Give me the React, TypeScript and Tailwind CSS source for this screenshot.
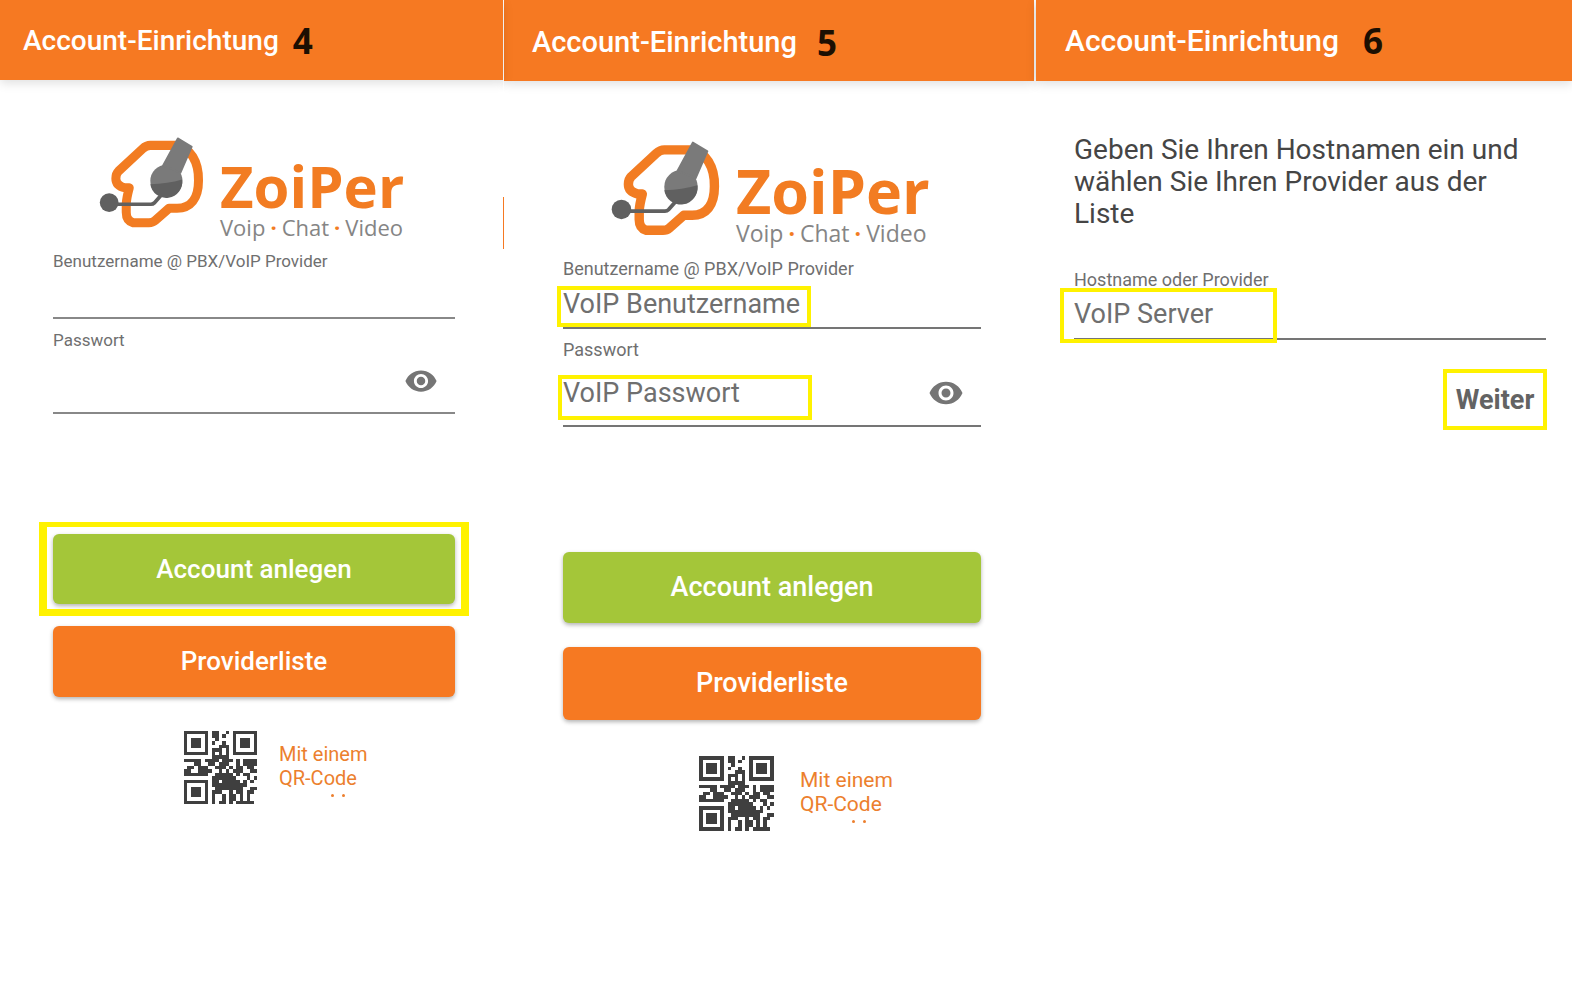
import React from "react";
import { MdVisibility } from "react-icons/md";

const qrRows = [
  "111111101100101111111",
  "100000101101001000001",
  "101110100100001011101",
  "101110101001001011101",
  "101110100011101011101",
  "100000101110101000001",
  "111111101010101111111",
  "000000001111100000000",
  "111110111101110101111",
  "000110011011100101111",
  "011011100111010110110",
  "110011110010101110011",
  "111111100111110101100",
  "000000001111111000101",
  "111111101101111101010",
  "100000101111111111000",
  "101110100111111110011",
  "101110101110010110110",
  "101110101001011010100",
  "100000101001011010100",
  "111111101011010111110",
];

const QrCode = ({ className }: { className: string }) => (
  <svg
    viewBox="0 0 21 21"
    className={`shrink-0 fill-[#3f3f3f] ${className}`}
    shapeRendering="crispEdges"
    role="img"
    aria-label="QR-Code"
  >
    {qrRows.map((row, y) =>
      row
        .split("")
        .map((cell, x) =>
          cell === "1" ? (
            <rect key={`${x}-${y}`} x={x} y={y} width="1" height="1" />
          ) : null
        )
    )}
  </svg>
);

const HeadsetIcon = ({ className }: { className: string }) => (
  <svg
    viewBox="57 50 313 272"
    className={`shrink-0 ${className}`}
    fill="none"
    aria-hidden="true"
  >
    <path
      d="M210 75H286C330 80 355 125 354 180C354 235 330 263 290 263H266L224 300Q217 306 206 306H158Q138 300 138 275V250Q139 232 147 202H135Q107 196 107 174Q107 160 115 152L187 85Q198 75 210 75Z"
      stroke="#f27c22"
      strokeWidth="27"
      strokeLinejoin="round"
    />
    <path
      d="M87 251H212Q218 251 222 247L244 222"
      stroke="#606060"
      strokeWidth="11"
    />
    <circle cx="87" cy="246" r="28" fill="#606060" />
    <circle cx="258" cy="181" r="48" fill="#7a7a7a" />
    <path d="M210 191Q262 190 305 177A48 48 0 0 1 210 191Z" fill="#606060" />
    <path
      d="M292 54L334 79L300 157L248 135Z"
      fill="#7a7a7a"
      stroke="#7a7a7a"
      strokeWidth="5"
      strokeLinejoin="round"
    />
  </svg>
);

const Header = ({
  step,
  className,
  gap,
}: {
  step: number;
  className: string;
  gap: string;
}) => (
  <header
    className={`flex items-center bg-[#f67922] shadow-[0_3px_10px_rgba(0,0,0,0.13)] ${className}`}
  >
    <h1 className="font-medium text-white">Account-Einrichtung</h1>
    <span
      className={`font-['Open_Sans',sans-serif] text-[35px] leading-10 font-bold text-[#1c0f02] ${gap}`}
    >
      {step}
    </span>
  </header>
);

const Logo = ({
  icon,
  name,
  tagline,
}: {
  icon: string;
  name: string;
  tagline: string;
}) => (
  <div className="flex font-['Open_Sans',sans-serif]">
    <HeadsetIcon className={icon} />
    <div className="whitespace-nowrap">
      <p className={`font-bold text-[#f27c22] ${name}`}>ZoiPer</p>
      <p className={`flex gap-[5px] text-[#858585] ${tagline}`}>
        <span>Voip</span>
        <span className="font-bold text-[#f27c22]">·</span>
        <span>Chat</span>
        <span className="font-bold text-[#f27c22]">·</span>
        <span>Video</span>
      </p>
    </div>
  </div>
);

const QrHint = ({ qr, text }: { qr: string; text: string }) => (
  <div className="flex items-start">
    <QrCode className={qr} />
    <a href="#qr" className={`text-[#ec7f2e] ${text}`}>
      Mit einem
      <br />
      QR-Code
      <span className="mt-1 ml-[52px] flex gap-2" aria-hidden="true">
        <i className="size-[3px] rounded-full bg-[#ec7f2e]" />
        <i className="size-[3px] rounded-full bg-[#ec7f2e]" />
      </span>
    </a>
  </div>
);

const inputStyle = "block w-full bg-transparent text-[#6f6f6f] outline-none";
const buttonStyle =
  "block w-full rounded-md font-medium text-white shadow-[0_2px_4px_rgba(0,0,0,0.3)]";

const App = () => {
  return (
    <main className="grid min-h-screen grid-cols-[504fr_532fr_536fr] bg-white font-[Roboto,sans-serif]">
      <section className="relative border-r border-white">
        <Header
          step={4}
          className="h-20 pt-0.5 pl-[23px] text-[28px]"
          gap="ml-3.5"
        />
        <div className="absolute top-[197px] -right-px h-[52px] w-px bg-[#f67922]" />
        <div className="pr-12 pl-[53px]">
          <div className="pt-[57px] pl-[46px]">
            <Logo
              icon="h-[91px] w-[105px]"
              name="ml-4 pt-5 text-[58px] leading-[58px]"
              tagline="ml-4 text-[22px] leading-6"
            />
          </div>
          <label
            htmlFor="user4"
            className="mt-3 block text-[17px] leading-5 text-[#6f6f6f]"
          >
            Benutzername @ PBX/VoIP Provider
          </label>
          <input
            id="user4"
            className={`h-12 border-b-2 border-[#888888] ${inputStyle}`}
          />
          <label
            htmlFor="pass4"
            className="mt-[11px] block text-[17px] leading-5 text-[#6f6f6f]"
          >
            Passwort
          </label>
          <div className="flex h-16 items-center border-b-2 border-[#888888]">
            <input id="pass4" type="password" className={`h-12 ${inputStyle}`} />
            <button aria-label="Passwort anzeigen" className="mr-[17px]">
              <MdVisibility className="size-[34px] text-[#757575]" />
            </button>
          </div>
          <div className="relative mt-[120px]">
            <button
              className={`h-[70px] bg-[#a4c639] text-[26px] ${buttonStyle}`}
            >
              Account anlegen
            </button>
            <div className="pointer-events-none absolute -inset-x-3.5 -inset-y-3 border-x-8 border-t-[5px] border-b-[7px] border-[#fff200]" />
          </div>
          <button
            className={`mt-[22px] h-[71px] bg-[#f67922] text-[26px] ${buttonStyle}`}
          >
            Providerliste
          </button>
          <div className="pt-[34px] pl-[131px]">
            <QrHint
              qr="size-[73px]"
              text="ml-[22px] pt-[11px] text-[20px] leading-6"
            />
          </div>
        </div>
      </section>

      <section className="border-r-2 border-white">
        <Header
          step={5}
          className="h-[81px] pt-1 pl-[28px] text-[29px]"
          gap="ml-5"
        />
        <div className="pr-[53px] pl-[59px]">
          <div className="pt-[60px] pl-[48px]">
            <Logo
              icon="h-[95px] w-[109px]"
              name="ml-4 pt-5 text-[61px] leading-[60px]"
              tagline="ml-4 text-[23px] leading-6"
            />
          </div>
          <label
            htmlFor="user5"
            className="mt-3.5 block text-[18px] leading-5 text-[#6f6f6f]"
          >
            Benutzername @ PBX/VoIP Provider
          </label>
          <div className="relative border-b-2 border-[#757575]">
            <input
              id="user5"
              defaultValue="VoIP Benutzername"
              className={`h-12 pt-0.5 text-[27px] ${inputStyle}`}
            />
            <div className="pointer-events-none absolute top-[7px] -left-1.5 h-[41px] w-[254px] border-4 border-[#fff200]" />
          </div>
          <label
            htmlFor="pass5"
            className="mt-[11px] block text-[18px] leading-5 text-[#6f6f6f]"
          >
            Passwort
          </label>
          <div className="relative flex h-[67px] items-center border-b-2 border-[#757575]">
            <input
              id="pass5"
              defaultValue="VoIP Passwort"
              className={`h-12 text-[27px] ${inputStyle}`}
            />
            <button aria-label="Passwort verbergen" className="mr-[17px]">
              <MdVisibility className="size-9 text-[#757575]" />
            </button>
            <div className="pointer-events-none absolute top-[15px] -left-[5px] h-[45px] w-[254px] border-4 border-[#fff200]" />
          </div>
          <button
            className={`mt-[125px] h-[71px] bg-[#a4c639] text-[27px] ${buttonStyle}`}
          >
            Account anlegen
          </button>
          <button
            className={`mt-6 h-[73px] bg-[#f67922] text-[27px] ${buttonStyle}`}
          >
            Providerliste
          </button>
          <div className="pt-9 pl-[136px]">
            <QrHint
              qr="size-[75px]"
              text="ml-[26px] pt-3 text-[21px] leading-6"
            />
          </div>
        </div>
      </section>

      <section>
        <Header
          step={6}
          className="h-[81px] pl-[29px] text-[30px]"
          gap="ml-6"
        />
        <div className="pr-[26px] pl-[38px]">
          <p className="pt-[53px] pr-6 text-[28px] leading-8 text-[#454545]">
            Geben Sie Ihren Hostnamen ein und wählen Sie Ihren Provider aus der
            Liste
          </p>
          <label
            htmlFor="host6"
            className="mt-10 block text-[18px] leading-5 text-[#6f6f6f]"
          >
            Hostname oder Provider
          </label>
          <div className="relative border-b-2 border-[#757575]">
            <input
              id="host6"
              defaultValue="VoIP Server"
              className={`h-12 text-[27px] ${inputStyle}`}
            />
            <div className="pointer-events-none absolute -top-0.5 -left-3.5 h-[55px] w-[217px] border-4 border-[#fff200]" />
          </div>
          <div className="flex justify-end pt-[29px]">
            <button className="-mr-px h-[61px] w-[104px] border-4 border-[#fff200] pt-0.5 text-[27px] font-bold text-[#636363]">
              Weiter
            </button>
          </div>
        </div>
      </section>
    </main>
  );
};

export default App;
